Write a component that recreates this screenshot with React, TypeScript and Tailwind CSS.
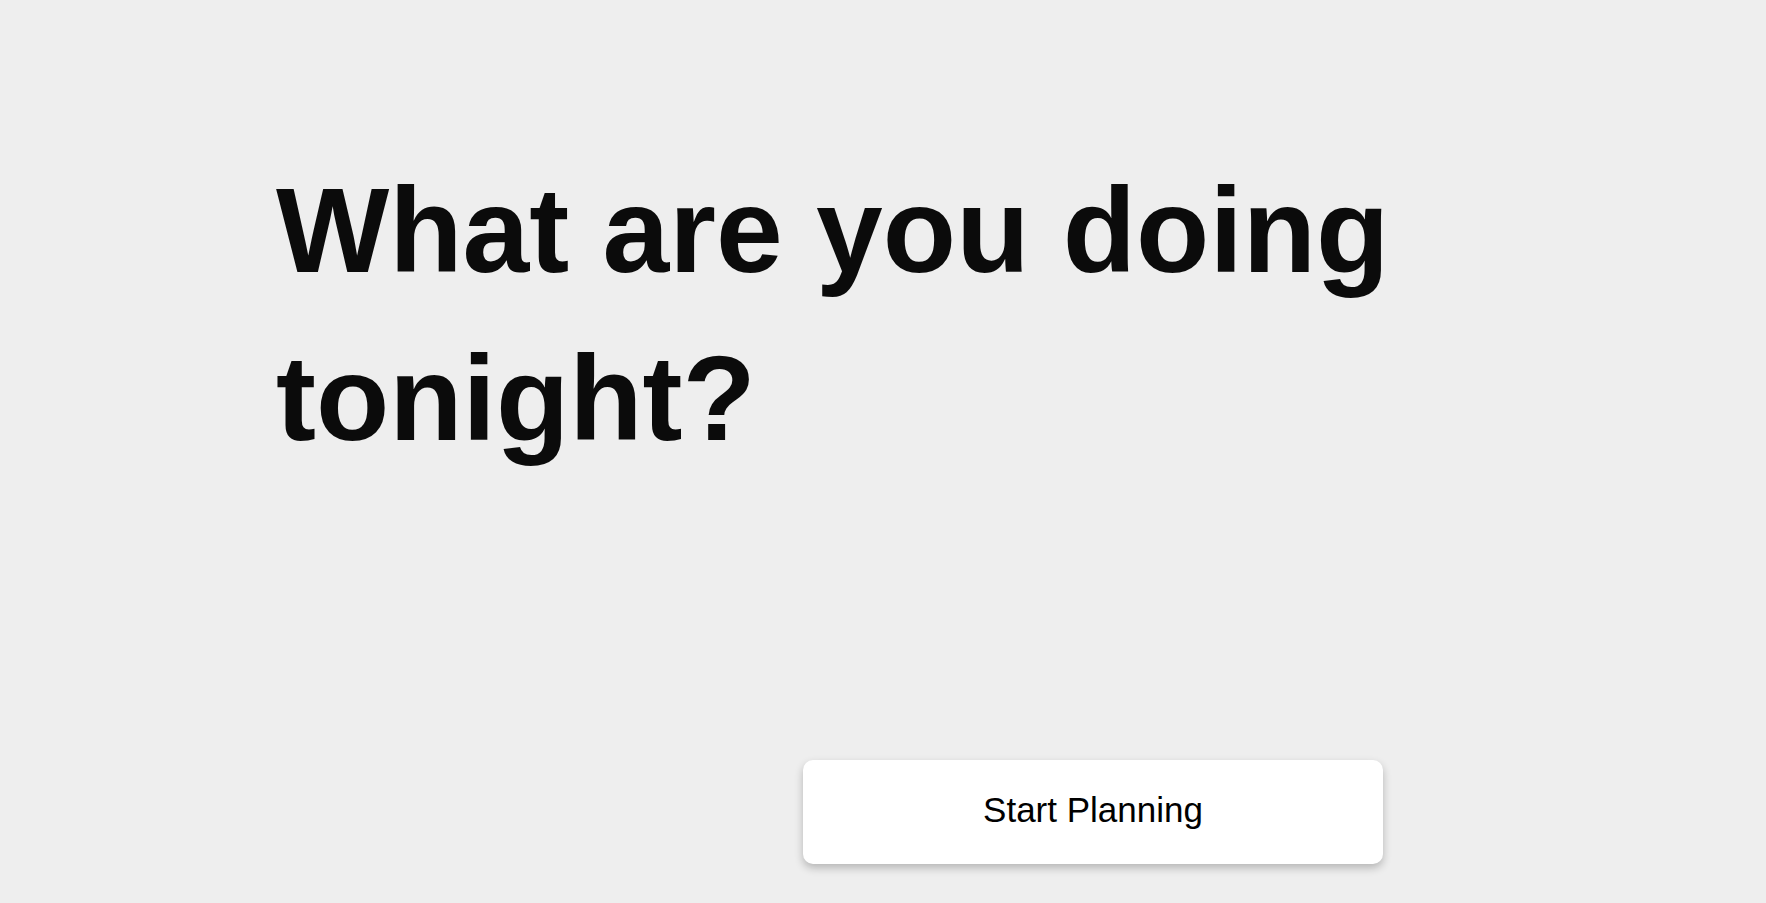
function App() {
  return (
    <div className="min-h-screen w-full bg-[#eeeeee] font-['Liberation_Sans',Arial,sans-serif]">
      <div className="pl-[276px] pt-[146px]">
        <h1 className="text-[120px] font-bold leading-[168px] text-[#0b0b0b]">
          What are you doing
          <br />
          tonight?
        </h1>

        <div className="mt-[278px] flex w-[1107px] justify-end">
          <button
            type="button"
            className="h-[104px] w-[580px] rounded-[10px] bg-white pb-[4px] text-[35px] text-black shadow-[0_4px_8px_rgba(0,0,0,0.24)]"
          >
            Start Planning
          </button>
        </div>
      </div>
    </div>
  );
}

export default App;
